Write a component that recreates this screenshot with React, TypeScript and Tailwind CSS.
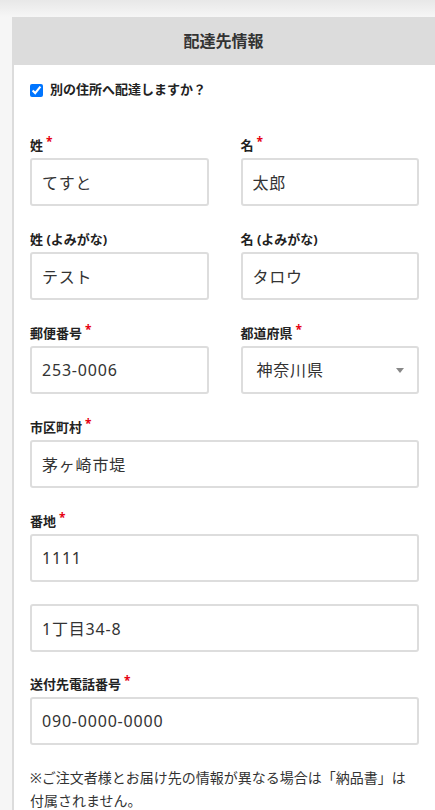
import React from "react";

const font = { fontFamily: '"Noto Sans", "Noto Sans CJK JP", sans-serif' };

function Req() {
  return <span className="ml-[3px] text-[12px] leading-[18px] text-[#e60012] relative -top-[3px]">*</span>;
}

function Label({ text, req }: { text: string; req?: boolean }) {
  return (
    <div className="h-[18px] leading-[18px] mb-[4px] text-[13px] font-bold text-[#222] flex items-start">
      <span>{text}</span>
      {req && <Req />}
    </div>
  );
}

function Input({ value }: { value: string }) {
  return (
    <input
      readOnly
      value={value}
      className="w-full h-[48px] border-2 border-[#dddddd] rounded-[3px] px-[10px] text-[16px] tracking-[0.05em] text-[#333] bg-white outline-none"
      style={font}
    />
  );
}

function Field({ label, req, value }: { label: string; req?: boolean; value: string }) {
  return (
    <div className="flex flex-col">
      <Label text={label} req={req} />
      <Input value={value} />
    </div>
  );
}

export default function App() {
  return (
    <div className="min-h-screen bg-[#f6f6f6]" style={font}>
      <div className="h-[17px] bg-gradient-to-b from-[#e8e8e8] to-[#f6f6f6]" />
      <div className="ml-[12px] border-l-2 border-[#dcdcdc] bg-white min-h-[793px]">
        <div className="h-[48px] bg-[#dcdcdc] flex items-center justify-center text-[16px] font-bold text-[#333] -ml-[2px]">
          配達先情報
        </div>
        <div className="px-4 pt-[16px] pb-4">
          <label className="flex items-center h-[18px] gap-[7px] text-[13px] font-bold text-[#222]">
            <input type="checkbox" checked readOnly className="w-[13px] h-[13px] m-0" />
            <span>別の住所へ配達しますか？</span>
          </label>

          <div className="grid grid-cols-2 gap-x-[32px] mt-[37px]">
            <Field label="姓" req value="てすと" />
            <Field label="名" req value="太郎" />
          </div>

          <div className="grid grid-cols-2 gap-x-[32px] mt-[24px]">
            <Field label="姓 (よみがな)" value="テスト" />
            <Field label="名 (よみがな)" value="タロウ" />
          </div>

          <div className="grid grid-cols-2 gap-x-[32px] mt-[24px]">
            <Field label="郵便番号" req value="253-0006" />
            <div className="flex flex-col">
              <Label text="都道府県" req />
              <div className="h-[48px] border-2 border-[#dddddd] rounded-[3px] pl-[14px] pr-[13px] flex items-center justify-between text-[16px] tracking-[0.05em] text-[#333]">
                <span>神奈川県</span>
                <svg width="8" height="5" viewBox="0 0 8 5">
                  <path d="M0 0 H8 L4 5 Z" fill="#888" />
                </svg>
              </div>
            </div>
          </div>

          <div className="mt-[24px]">
            <Field label="市区町村" req value="茅ヶ崎市堤" />
          </div>

          <div className="mt-[24px]">
            <Field label="番地" req value="1111" />
          </div>

          <div className="mt-[22px]">
            <Input value="1丁目34-8" />
          </div>

          <div className="mt-[23px]">
            <Field label="送付先電話番号" req value="090-0000-0000" />
          </div>

          <p className="mt-[21px] text-[14px] leading-[23px] text-[#333]">
            ※ご注文者様とお届け先の情報が異なる場合は「納品書」は付属されません。
          </p>
        </div>
      </div>
    </div>
  );
}
